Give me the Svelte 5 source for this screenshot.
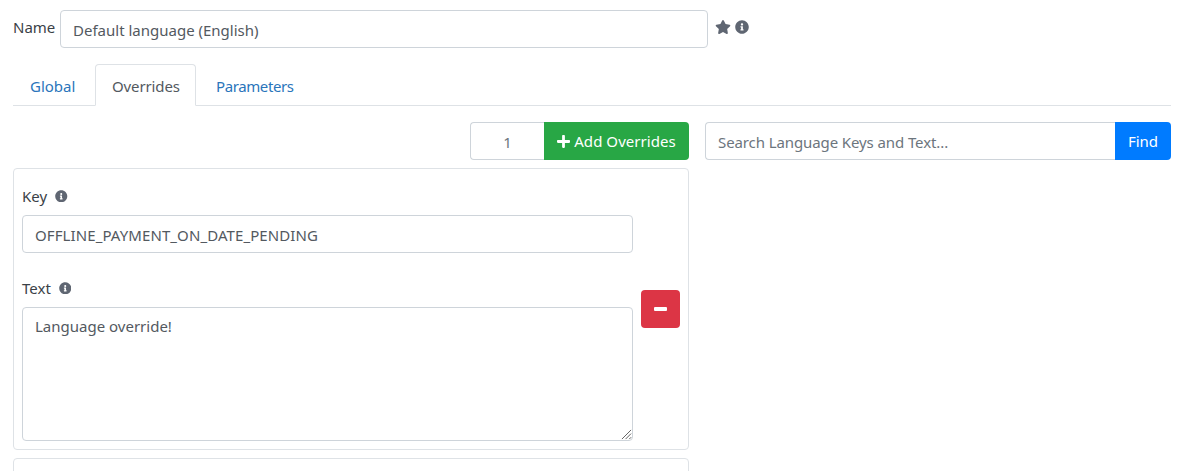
<script>
  const tabs = [
    { label: 'Global', kind: 'global', active: false },
    { label: 'Overrides', kind: 'overrides', active: true },
    { label: 'Parameters', kind: 'parameters', active: false }
  ];
</script>

<div class="page">
  <div class="name-row">
    <span class="name-label">Name</span>
    <div class="field name-field">Default language (English)</div>
    <svg class="star" viewBox="0 0 576 512" aria-hidden="true"><path d="M259.3 17.8L194 150.2 47.9 171.5c-26.2 3.8-36.700 36.100-17.700 54.600l105.700 103-25 145.500c-4.500 26.300 23.200 46 46.400 33.700L288 439.600l130.700 68.700c23.200 12.200 50.900-7.400 46.400-33.700l-25-145.500 105.700-103c19-18.500 8.500-50.800-17.700-54.600L382 150.200 316.700 17.800c-11.700-23.600-45.600-23.900-57.400 0z"/></svg>
    <svg class="info top" viewBox="0 0 512 512" aria-hidden="true"><path d="M256 8C119 8 8 119 8 256s111 248 248 248 248-111 248-248S393 8 256 8zm0 110c23.200 0 42 18.800 42 42s-18.800 42-42 42-42-18.800-42-42 18.800-42 42-42zm56 254c0 6.600-5.400 12-12 12h-88c-6.600 0-12-5.400-12-12v-24c0-6.600 5.400-12 12-12h12v-64h-12c-6.600 0-12-5.400-12-12v-24c0-6.600 5.400-12 12-12h64c6.600 0 12 5.400 12 12v100h12c6.600 0 12 5.400 12 12v24z"/></svg>
  </div>

  <nav class="tabs">
    {#each tabs as tab}
      <span class="tab {tab.kind}" class:active={tab.active}>{tab.label}</span>
    {/each}
  </nav>

  <div class="columns">
    <div class="left">
      <div class="add-row">
        <div class="count">1</div>
        <div class="btn add">
          <svg class="plus" viewBox="0 0 448 512" aria-hidden="true"><path d="M416 208H272V64c0-17.700-14.300-32-32-32h-32c-17.700 0-32 14.300-32 32v144H32c-17.700 0-32 14.300-32 32v32c0 17.700 14.300 32 32 32h144v144c0 17.700 14.300 32 32 32h32c17.700 0 32-14.300 32-32V304h144c17.700 0 32-14.300 32-32v-32c0-17.700-14.300-32-32-32z"/></svg>
          Add Overrides
        </div>
      </div>

      <div class="card">
        <div class="fields">
          <div class="label key-label">
            Key
            <svg class="info" viewBox="0 0 512 512" aria-hidden="true"><path d="M256 8C119 8 8 119 8 256s111 248 248 248 248-111 248-248S393 8 256 8zm0 110c23.200 0 42 18.800 42 42s-18.800 42-42 42-42-18.800-42-42 18.800-42 42-42zm56 254c0 6.600-5.400 12-12 12h-88c-6.600 0-12-5.400-12-12v-24c0-6.600 5.400-12 12-12h12v-64h-12c-6.600 0-12-5.400-12-12v-24c0-6.600 5.400-12 12-12h64c6.600 0 12 5.400 12 12v100h12c6.600 0 12 5.400 12 12v24z"/></svg>
          </div>
          <div class="field key-field">OFFLINE_PAYMENT_ON_DATE_PENDING</div>
          <div class="label text-label">
            Text
            <svg class="info" viewBox="0 0 512 512" aria-hidden="true"><path d="M256 8C119 8 8 119 8 256s111 248 248 248 248-111 248-248S393 8 256 8zm0 110c23.200 0 42 18.800 42 42s-18.800 42-42 42-42-18.800-42-42 18.800-42 42-42zm56 254c0 6.600-5.400 12-12 12h-88c-6.600 0-12-5.400-12-12v-24c0-6.600 5.400-12 12-12h12v-64h-12c-6.600 0-12-5.400-12-12v-24c0-6.600 5.400-12 12-12h64c6.600 0 12 5.400 12 12v100h12c6.600 0 12 5.400 12 12v24z"/></svg>
          </div>
          <div class="field area">
            Language override!
            <svg class="grip" viewBox="0 0 12 12" aria-hidden="true"><path d="M1 11L11 1M5 11l6-6M9 11l2-2" stroke="#555" stroke-width="1" fill="none"/></svg>
          </div>
        </div>
        <div class="btn remove"><span class="minus"></span></div>
      </div>

      <div class="card next"></div>
    </div>

    <div class="right">
      <div class="field search">Search Language Keys and Text...</div>
      <div class="btn find">Find</div>
    </div>
  </div>
</div>

<style>
  :global(body) {
    margin: 0;
    background: #fff;
  }

  .page {
    box-sizing: border-box;
    width: 1183px;
    height: 471px;
    overflow: hidden;
    padding: 10px 12px 0 13px;
    font-family: "Noto Sans", "Open Sans", sans-serif;
    font-size: 15px;
    line-height: 22px;
    color: #495057;
  }

  .field {
    box-sizing: border-box;
    height: 38px;
    padding: 8px 12px 6px;
    background: #fff;
    border: 1px solid #ced4da;
    border-radius: 4px;
    color: #53595f;
    white-space: nowrap;
  }

  .name-row {
    display: flex;
    align-items: flex-start;
  }

  .name-label {
    width: 47px;
    padding-top: 6px;
    color: #3b4147;
  }

  .name-field {
    width: 648px;
  }

  .star {
    width: 16px;
    height: 14px;
    margin: 10px 0 0 7px;
    fill: #5f6672;
  }

  .info {
    width: 12.500px;
    height: 12.500px;
    fill: #5f6672;
  }

  .info.top {
    width: 14px;
    height: 14px;
    margin: 10px 0 0 4px;
  }

  .tabs {
    display: flex;
    height: 41px;
    margin-top: 16px;
    border-bottom: 1px solid #dee2e6;
  }

  .tab {
    box-sizing: border-box;
    height: 42px;
    padding-top: 10px;
    border: 1px solid transparent;
    border-radius: 4px 4px 0 0;
    color: #2a75bb;
  }

  .global {
    width: 82px;
    padding-left: 16px;
  }

  .overrides {
    width: 101px;
    padding-left: 16px;
    letter-spacing: -0.12px;
  }

  .parameters {
    padding: 10px 16px 0 19px;
    letter-spacing: -0.4px;
  }

  .tab.active {
    background: #fff;
    border-color: #dee2e6 #dee2e6 #fff;
    color: #53595f;
  }

  .columns {
    display: flex;
    gap: 16px;
    margin-top: 16px;
  }

  .left {
    width: 676px;
  }

  .right {
    display: flex;
    width: 466px;
    height: 38px;
  }

  .add-row {
    display: flex;
    justify-content: flex-end;
    margin-bottom: 8px;
  }

  .count {
    box-sizing: border-box;
    width: 74px;
    height: 38px;
    padding-top: 8px;
    text-align: center;
    border: 1px solid #ced4da;
    border-right: 0;
    border-radius: 4px 0 0 4px;
    color: #6c757d;
  }

  .btn {
    box-sizing: border-box;
    display: flex;
    align-items: center;
    justify-content: center;
    height: 38px;
    color: #fff;
    border-radius: 4px;
    white-space: nowrap;
  }

  .add {
    width: 145px;
    gap: 4px;
    background: #28a745;
    border-radius: 0 4px 4px 0;
    letter-spacing: 0.05px;
  }

  .plus {
    width: 13px;
    height: 15px;
    fill: #fff;
  }

  .card {
    box-sizing: border-box;
    display: flex;
    align-items: flex-start;
    gap: 8px;
    height: 282px;
    padding: 16px 8px 8px;
    border: 1px solid #dee2e6;
    border-radius: 4px;
  }

  .card.next {
    height: 40px;
    margin-top: 8px;
  }

  .fields {
    width: 611px;
  }

  .label {
    display: flex;
    align-items: center;
    gap: 8px;
    color: #3b4147;
  }

  .key-label {
    margin-bottom: 8px;
  }

  .text-label {
    margin: 24px 0 8px;
  }

  .key-field {
    letter-spacing: 0.1px;
  }

  .area {
    position: relative;
    height: 134px;
    padding-top: 7px;
  }

  .grip {
    position: absolute;
    right: 0;
    bottom: 0;
    width: 11px;
    height: 11px;
  }

  .remove {
    width: 39px;
    margin-top: 105px;
    background: #dc3545;
  }

  .minus {
    width: 13px;
    height: 4px;
    background: #fff;
    border-radius: 1px;
  }

  .search {
    flex: 1;
    border-right: 0;
    border-radius: 4px 0 0 4px;
    color: #6c757d;
    letter-spacing: -0.1px;
  }

  .find {
    width: 56px;
    background: #007bff;
    border-radius: 0 4px 4px 0;
  }
</style>
